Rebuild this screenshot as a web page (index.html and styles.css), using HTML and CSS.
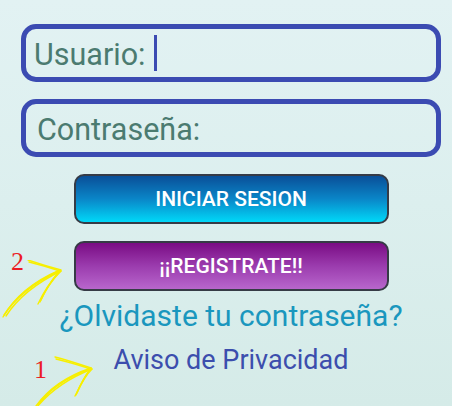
FILE: index.html
```html
<!DOCTYPE html>
<html lang="es">
<head>
<meta charset="utf-8">
<link rel="stylesheet" href="styles.css">
</head>
<body>
<main class="login">
  <div class="field field-user"><span class="label">Usuario:</span><span class="cursor"></span></div>
  <div class="field field-pass"><span class="label">Contraseña:</span></div>
  <button class="btn btn-login">INICIAR SESION</button>
  <button class="btn btn-register">¡¡REGISTRATE!!</button>
  <a class="link link-forgot">¿Olvidaste tu contraseña?</a>
  <a class="link link-privacy">Aviso de Privacidad</a>
</main>
<div class="mark mark-2">
  <span class="num">2</span>
  <svg class="arrow" width="70" height="60" viewBox="0 0 70 60">
    <g fill="none" stroke="#f7ef00" stroke-width="1.4" stroke-linecap="round">
      <path d="M3 57 C14 38 32 22 60 10"/>
      <path d="M4 55 C16 37 33 23 59 11"/>
      <path d="M6 56 C17 39 34 24 61 11"/>
      <path d="M28 0 C40 4 50 7 61 10"/>
      <path d="M29 2 C41 5 51 8 60 11"/>
      <path d="M40 42 C45 30 52 20 60 10"/>
      <path d="M41 40 C46 29 53 19 61 11"/>
      <path d="M38 44 C44 31 51 21 59 12"/>
    </g>
  </svg>
</div>
<div class="mark mark-1">
  <span class="num">1</span>
  <svg class="arrow" width="70" height="60" viewBox="0 0 70 60">
    <g fill="none" stroke="#f7ef00" stroke-width="1.4" stroke-linecap="round">
      <path d="M3 58 C16 40 34 28 58 20"/>
      <path d="M5 57 C17 40 35 29 57 21"/>
      <path d="M4 59 C18 42 36 30 59 21"/>
      <path d="M22 9 C34 12 46 16 58 20"/>
      <path d="M23 11 C35 14 47 17 57 21"/>
      <path d="M43 47 C47 37 52 28 58 20"/>
      <path d="M44 45 C48 36 53 27 59 21"/>
      <path d="M42 48 C47 38 51 29 57 22"/>
    </g>
  </svg>
</div>
</body>
</html>
```
FILE: styles.css
```css
html, body {
  margin: 0;
  height: 100%;
}
body {
  background: linear-gradient(180deg, #e2f2f3 0%, #dcefee 50%, #d5ebe8 100%);
  font-family: Roboto, "Noto Sans", sans-serif;
  position: relative;
  overflow: hidden;
}
.login {
  display: flex;
  flex-direction: column;
  align-items: center;
  padding: 24px 11px 0 21px;
}
.field {
  box-sizing: border-box;
  width: 420px;
  height: 58px;
  border: 5px solid #3b4bb2;
  border-radius: 15px;
  display: flex;
  align-items: center;
  padding-top: 2px;
  margin-bottom: 17px;
}
.field-user { padding-left: 8px; }
.field-pass { padding-left: 11px; }
.label {
  font-size: 30.5px;
  color: #4b7b70;
}
.cursor {
  display: inline-block;
  width: 3px;
  height: 36px;
  margin-left: 9px;
  margin-top: -2px;
  background: #3b4bb2;
}
.btn {
  box-sizing: border-box;
  width: 315px;
  height: 50px;
  border: 2.5px solid #363b46;
  border-radius: 10px;
  font-family: Roboto, sans-serif;
  font-weight: 500;
  font-size: 21px;
  color: #ffffff;
  padding: 0;
  margin-bottom: 17px;
}
.btn-login {
  background: linear-gradient(180deg, #0a4f98 0%, #0a86c8 50%, #00d8f8 100%);
}
.btn-register {
  background: linear-gradient(180deg, #7a0c84 0%, #9b3cae 50%, #b866cc 100%);
  margin-bottom: 9px;
}
.link {
  display: block;
  text-align: center;
}
.link-forgot {
  font-size: 30px;
  color: #1a97be;
  line-height: 32px;
}
.link-privacy {
  font-size: 27px;
  color: #3c4ead;
  line-height: 30px;
  margin-top: 13px;
}
.mark {
  position: absolute;
  width: 70px;
  height: 60px;
}
.mark .num {
  position: absolute;
  font-family: "Liberation Serif", serif;
  font-size: 26px;
  color: #ec1c24;
  line-height: 1;
}
.mark .arrow {
  position: absolute;
  left: 0;
  top: 0;
}
.mark-2 { left: 0; top: 260px; }
.mark-2 .num { left: 11px; top: -11px; }
.mark-1 { left: 33px; top: 348px; }
.mark-1 .num { left: 1px; top: 9px; }
```
